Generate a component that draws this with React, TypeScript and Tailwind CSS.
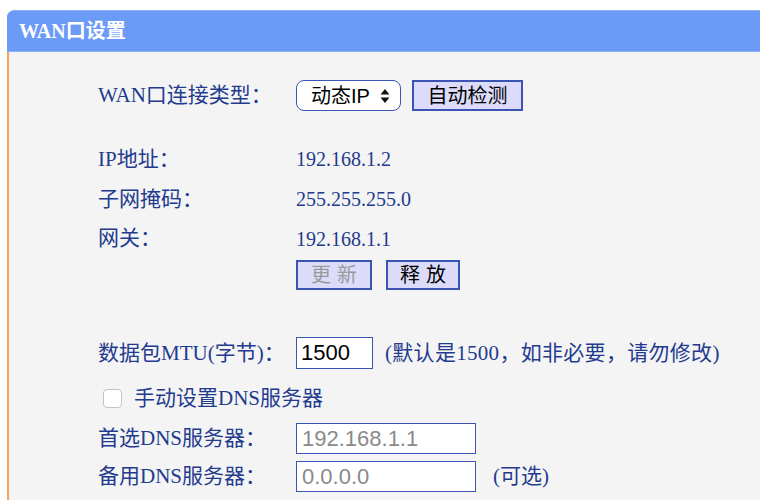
import React from "react";

const serif = "font-['Liberation_Serif','Noto_Sans_CJK_SC',serif]";
const sans = "font-['Liberation_Sans','Noto_Sans_CJK_SC',sans-serif]";

function Label({ children }: { children: React.ReactNode }) {
  return <div className="w-[198px] shrink-0">{children}</div>;
}

function SortArrows() {
  return (
    <svg width="10" height="16" viewBox="0 0 10 16" className="ml-auto">
      <path d="M5 1 L9.5 6.5 H0.5 Z" fill="#111" />
      <path d="M5 15 L9.5 9.5 H0.5 Z" fill="#111" />
    </svg>
  );
}

export default function App() {
  return (
    <div className={`w-[760px] h-[500px] bg-white pt-[10px] pl-[7px] overflow-hidden ${serif}`}>
      <div className="h-full flex flex-col">
        {/* Panel title */}
        <div className="h-[42px] shrink-0 bg-[#6c9af7] border-t border-[#8db0fa] border-b border-b-[#8fb1f6] rounded-tl-[7px] flex items-center pl-[12px]">
          <span className="text-white text-[20px] font-bold leading-none">WAN口设置</span>
        </div>

        {/* Panel body */}
        <div className="flex-1 bg-[#f4f4f4] border-l-2 border-[#f4a25e] pl-[89px] pt-[28px] text-[21px] text-[#233b8f] leading-none">
          <div className="flex items-center h-[31px]">
            <Label>WAN口连接类型：</Label>
            <div
              className={`w-[105px] h-[31px] bg-white border-[1.5px] border-[#3a55b6] rounded-[8px] flex items-center pl-[14px] pr-[10px] text-[20px] text-black ${sans}`}
            >
              动态IP
              <SortArrows />
            </div>
            <button
              className={`ml-[11px] w-[111px] h-[31px] bg-[#dcdcfa] border-2 border-[#3b53b3] text-[20px] text-black ${sans}`}
            >
              自动检测
            </button>
          </div>

          <div className="mt-[28px] flex items-center h-[40px]">
            <Label>IP地址：</Label>
            <span className="text-[20px]">192.168.1.2</span>
          </div>
          <div className="flex items-center h-[40px]">
            <Label>子网掩码：</Label>
            <span className="text-[20px]">255.255.255.0</span>
          </div>
          <div className="flex items-center h-[39px]">
            <Label>网关：</Label>
            <span className="text-[20px]">192.168.1.1</span>
          </div>

          <div className="mt-[2px] flex items-center h-[30px]">
            <Label>{null}</Label>
            <button
              className={`w-[76px] h-[30px] bg-[#dcdcfa] border-2 border-[#3b53b3] text-[20px] text-[#9a9a9a] tracking-[6px] pl-[6px] ${sans}`}
            >
              更新
            </button>
            <button
              className={`ml-[14px] w-[74px] h-[30px] bg-[#dcdcfa] border-2 border-[#3b53b3] text-[20px] text-black tracking-[6px] pl-[6px] ${sans}`}
            >
              释放
            </button>
          </div>

          <div className="mt-[47px] flex items-center h-[32px]">
            <Label>数据包MTU(字节)：</Label>
            <div
              className={`w-[77px] h-[32px] bg-white border-[1.5px] border-[#3a55b6] flex items-center pl-[4px] text-[22px] text-black ${sans}`}
            >
              1500
            </div>
            <span className="ml-[12px] tracking-[0.3px]">(默认是1500，如非必要，请勿修改)</span>
          </div>

          <div className="mt-[19px] flex items-center h-[20px] pl-[5px]">
            <div className="w-[19px] h-[19px] bg-white border border-[#c4c4c4] rounded-[4px]" />
            <span className="ml-[12px]">手动设置DNS服务器</span>
          </div>

          <div className="mt-[15px] flex items-center h-[31px]">
            <Label>首选DNS服务器：</Label>
            <div
              className={`w-[180px] h-[31px] bg-white border-[1.5px] border-[#3a55b6] flex items-center pl-[5px] text-[22px] text-[#8a8a8a] ${sans}`}
            >
              192.168.1.1
            </div>
          </div>
          <div className="mt-[7px] flex items-center h-[31px]">
            <Label>备用DNS服务器：</Label>
            <div
              className={`w-[180px] h-[31px] bg-white border-[1.5px] border-[#3a55b6] flex items-center pl-[5px] text-[22px] text-[#8a8a8a] ${sans}`}
            >
              0.0.0.0
            </div>
            <span className="ml-[17px]">(可选)</span>
          </div>
        </div>
      </div>
    </div>
  );
}
